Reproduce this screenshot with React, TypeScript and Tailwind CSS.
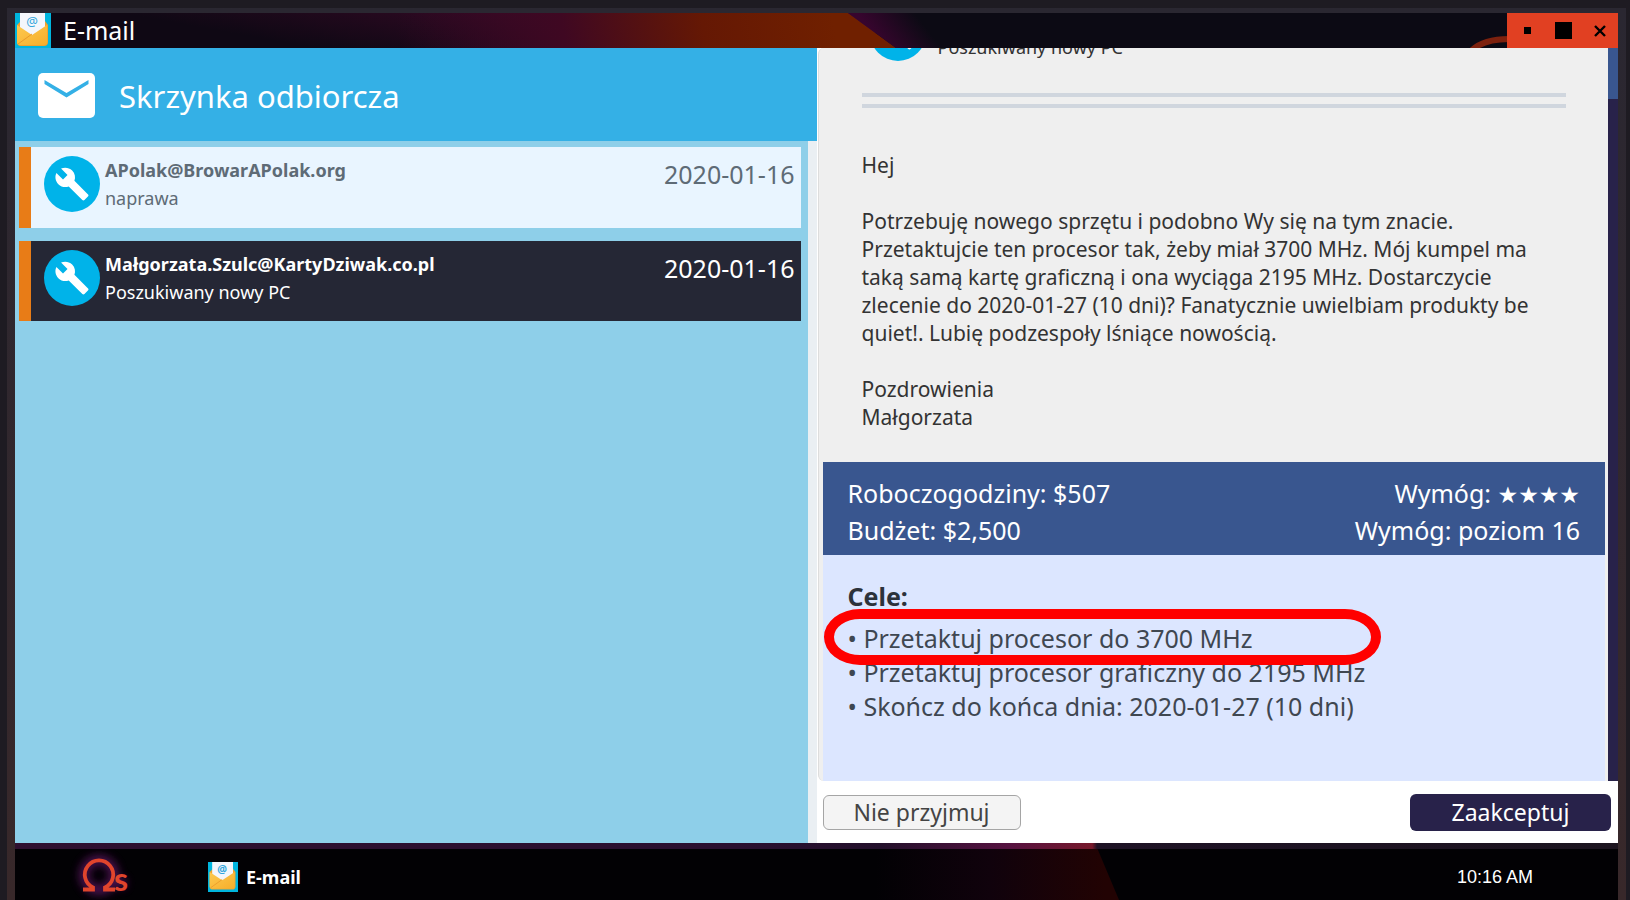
import { useState } from "react";
import { MdBuild } from "react-icons/md";

type Mail = {
  id: number;
  from: string;
  subject: string;
  date: string;
};

const mails: Mail[] = [
  { id: 1, from: "APolak@BrowarAPolak.org", subject: "naprawa", date: "2020-01-16" },
  { id: 2, from: "Małgorzata.Szulc@KartyDziwak.co.pl", subject: "Poszukiwany nowy PC", date: "2020-01-16" },
];

const goals = [
  "Przetaktuj procesor do 3700 MHz",
  "Przetaktuj procesor graficzny do 2195 MHz",
  "Skończ do końca dnia: 2020-01-27 (10 dni)",
];

function MailAppIcon({ className }: { className: string }) {
  return (
    <svg viewBox="0 0 36 36" className={className} aria-hidden="true">
      <defs>
        <linearGradient id="flap" x1="0" y1="0" x2="1" y2="1">
          <stop offset="0" stopColor="#fdc94f" />
          <stop offset="1" stopColor="#f6ae2b" />
        </linearGradient>
      </defs>
      <rect width="36" height="36" fill="#00b5de" />
      <path d="M2 12 6 8h24l3 4v17a4 4 0 0 1-4 4H6a4 4 0 0 1-4-4Z" fill="#f0a22e" />
      <path d="M5 0h25v22H5Z" fill="#f4f6fb" />
      <text x="17" y="13" textAnchor="middle" fontSize="13" fill="#35a6dc" fontFamily="Noto Sans, sans-serif">
        @
      </text>
      <path d="M2 12 17 22 32 12v17a3 3 0 0 1-3 3H5a3 3 0 0 1-3-3Z" fill="url(#flap)" />
      <path d="M3 31 17 21" stroke="#e99a2b" strokeWidth="1" fill="none" />
    </svg>
  );
}

function InboxIcon() {
  return (
    <svg viewBox="0 0 57 45" className="h-[45px] w-[57px]" aria-hidden="true">
      <rect width="57" height="45" rx="5" fill="#fff" />
      <path d="M6.500 7 28.500 20 50.500 7v4L28.500 24.500 6.500 11Z" fill="#34b0e6" />
    </svg>
  );
}

function OmegaLogo() {
  return (
    <svg viewBox="0 -1 80 50" className="h-[50px] w-20 overflow-visible" aria-hidden="true">
      <defs>
        <filter id="glow" x="-50%" y="-50%" width="200%" height="200%">
          <feGaussianBlur stdDeviation="4" />
        </filter>
      </defs>
      <g fill="none" stroke="#7a1a80" strokeWidth="10" opacity="0.6" filter="url(#glow)">
        <circle cx="33" cy="22" r="15" />
        <path d="M51 30h9" />
      </g>
      <path
        d="M17 36.500H27V34.500A14.200 14.200 0 1 1 39 34.500V36.500H49"
        fill="none"
        stroke="#e0452c"
        strokeWidth="3.800"
      />
      <text x="48" y="38" fontSize="32" fontWeight="700" fill="#e0452c" fontFamily="Lato, sans-serif">
        s
      </text>
    </svg>
  );
}

function TitleBarArt() {
  return (
    <svg viewBox="0 0 1603 35" preserveAspectRatio="none" className="absolute inset-0 h-full w-full" aria-hidden="true">
      <defs>
        <linearGradient id="sweep" gradientUnits="userSpaceOnUse" x1="300" y1="35" x2="318" y2="-65">
          <stop offset="0" stopColor="#0f0814" />
          <stop offset="1" stopColor="#3f0a2a" />
        </linearGradient>
        <linearGradient id="ember" gradientUnits="userSpaceOnUse" x1="385" y1="35" x2="810" y2="-40">
          <stop offset="0" stopColor="#3c0726" stopOpacity="0" />
          <stop offset="0.380" stopColor="#3f0822" />
          <stop offset="0.700" stopColor="#651804" />
          <stop offset="1" stopColor="#702000" />
        </linearGradient>
        <linearGradient id="edge" gradientUnits="userSpaceOnUse" x1="856" y1="18" x2="892" y2="-10">
          <stop offset="0" stopColor="#37052e" />
          <stop offset="1" stopColor="#0c0a14" />
        </linearGradient>
      </defs>
      <rect width="1603" height="35" fill="#0c0a14" />
      <rect width="860" height="35" fill="url(#sweep)" />
      <path d="M300 0H833L881 35H300Z" fill="url(#ember)" />
      <path d="M833 0H1000V35H881Z" fill="url(#edge)" />
      <path d="M1456 38Q1468 26 1494 26" fill="none" stroke="#7d210e" strokeWidth="6" />
    </svg>
  );
}

function TaskbarArt() {
  return (
    <svg viewBox="0 0 1603 57" preserveAspectRatio="none" className="absolute inset-0 h-full w-full" aria-hidden="true">
      <defs>
        <linearGradient id="strip">
          <stop offset="0" stopColor="#2f1030" />
          <stop offset="0.450" stopColor="#2a1030" />
          <stop offset="0.540" stopColor="#23102b" />
          <stop offset="0.620" stopColor="#561240" />
          <stop offset="0.672" stopColor="#76192b" />
          <stop offset="0.675" stopColor="#1e1225" />
          <stop offset="1" stopColor="#1c141f" />
        </linearGradient>
        <linearGradient id="floor" gradientUnits="userSpaceOnUse" x1="860" y1="0" x2="1090" y2="0">
          <stop offset="0" stopColor="#020104" />
          <stop offset="0.500" stopColor="#10020c" />
          <stop offset="1" stopColor="#220303" />
        </linearGradient>
      </defs>
      <rect width="1603" height="57" fill="#020104" />
      <path d="M860 0H1080L1104 57H860Z" fill="url(#floor)" />
      <rect width="1603" height="6" fill="url(#strip)" />
    </svg>
  );
}

function Avatar() {
  return (
    <span className="flex size-14 shrink-0 items-center justify-center rounded-full bg-[#00b3e9] text-white">
      <MdBuild className="size-9" />
    </span>
  );
}

export default function App() {
  const [selectedId, setSelectedId] = useState(2);

  return (
    <div className="h-screen overflow-hidden bg-[#1e1b22] pl-[7px] pr-1 pt-2 font-['Noto_Sans',sans-serif]">
      <div className="flex h-full flex-col bg-linear-to-b from-[#2a2731] to-[#38282a] pl-2 pr-2 pt-[5px]">
        {/* Title bar */}
        <header className="relative flex h-[35px] shrink-0 justify-between overflow-hidden">
          <TitleBarArt />
          <div className="relative flex items-center">
            <MailAppIcon className="size-9" />
            <h1 className="pb-0.5 pl-3 text-[25px] leading-8 text-white">E-mail</h1>
          </div>
          <div className="relative flex w-[111px] items-center bg-[#e14022] pl-0.5">
            <button type="button" aria-label="Minimalizuj" className="flex h-full flex-1 items-center justify-center">
              <span className="size-[7px] bg-black" />
            </button>
            <button type="button" aria-label="Maksymalizuj" className="flex h-full flex-1 items-center justify-center">
              <span className="size-[17px] bg-black" />
            </button>
            <button type="button" aria-label="Zamknij" className="flex h-full flex-1 items-center justify-center">
              <svg viewBox="0 0 12 12" className="size-3" aria-hidden="true">
                <path d="M1 1 11 11M11 1 1 11" stroke="#000" strokeWidth="2.400" />
              </svg>
            </button>
          </div>
        </header>

        <main className="flex min-h-0 flex-1">
          {/* Inbox */}
          <section className="flex min-w-0 flex-1 flex-col">
            <div className="flex h-[93px] shrink-0 items-center gap-6 bg-[#34b0e6] px-[23px] pt-0.5">
              <InboxIcon />
              <h2 className="text-[31px] leading-10 text-white">Skrzynka odbiorcza</h2>
            </div>
            <div className="flex flex-1 bg-[#eaeff3] pr-[9px]">
              <ul className="flex flex-1 flex-col gap-[13px] bg-[#8ecfe9] pl-1 pr-[7px] pt-1.5">
                {mails.map((mail) => {
                  const selected = mail.id === selectedId;
                  return (
                    <li key={mail.id}>
                      <button
                        type="button"
                        onClick={() => setSelectedId(mail.id)}
                        className={
                          selected
                            ? "flex h-20 w-full items-start gap-[5px] border-l-12 border-[#e87c17] bg-[#252735] pl-[13px] pr-1.5 pt-[9px] text-left text-white"
                            : "flex h-[81px] w-full items-start gap-[5px] border-l-12 border-[#e87c17] bg-[#e9f5ff] pl-[13px] pr-1.5 pt-[9px] text-left text-[#5e6b76]"
                        }
                      >
                        <Avatar />
                        <span className="flex flex-1 flex-col text-[18px] leading-7">
                          <span className="font-bold">{mail.from}</span>
                          <span>{mail.subject}</span>
                        </span>
                        <span className="text-[25px] leading-9">{mail.date}</span>
                      </button>
                    </li>
                  );
                })}
              </ul>
            </div>
          </section>

          {/* Opened message */}
          <section className="flex min-w-0 flex-1 flex-col bg-white">
            <div className="flex min-h-0 flex-1">
              <article className="ml-px flex min-w-0 flex-1 flex-col justify-end overflow-hidden rounded-l-md border-l border-[#dddddd] bg-[#efefef] pl-1 pr-[3px]">
                <div className="pl-[39px] pr-[39px] text-[21px] leading-7 text-[#333333]">
                  <div className="flex items-end gap-3 pl-2">
                    <Avatar />
                    <p className="text-[18px]">Poszukiwany nowy PC</p>
                  </div>
                  <div className="my-8 h-[15px] border-y-4 border-[#d0d6de]" />
                  <div className="pt-[11px]">
                    <p>Hej</p>
                    <p className="pt-7">
                      Potrzebuję nowego sprzętu i podobno Wy się na tym znacie. Przetaktujcie ten procesor tak, żeby miał
                      3700 MHz. Mój kumpel ma taką samą kartę graficzną i ona wyciąga 2195 MHz. Dostarczycie zlecenie do
                      2020-01-27 (10 dni)? Fanatycznie uwielbiam produkty be quiet!. Lubię podzespoły lśniące nowością.
                    </p>
                    <p className="pt-7">Pozdrowienia</p>
                    <p className="pb-[31px]">Małgorzata</p>
                  </div>
                </div>

                <div className="flex h-[93px] shrink-0 items-center justify-between bg-[#39568f] px-[25px] pt-1.5 text-[25px] leading-[37px] text-white">
                  <div>
                    <p>Roboczogodziny: $507</p>
                    <p>Budżet: $2,500</p>
                  </div>
                  <div className="text-right">
                    <p>
                      Wymóg: <span className="font-['DejaVu_Sans',sans-serif] text-[23px] leading-8">★★★★</span>
                    </p>
                    <p>Wymóg: poziom 16</p>
                  </div>
                </div>

                <div className="h-[226px] shrink-0 bg-[#dce6ff] px-[25px] pt-6 text-[25px] leading-[34px] text-[#3f4751]">
                  <h3 className="pb-2 font-bold text-[#2c323a]">Cele:</h3>
                  <ul>
                    {goals.map((goal, i) => (
                      <li key={goal} className="relative w-fit">
                        • {goal}
                        {i === 0 && (
                          <span className="pointer-events-none absolute -left-6 -top-3 z-10 h-14 w-[557px] rounded-[36px/28px] border-10 border-[#ff0000]" />
                        )}
                      </li>
                    ))}
                  </ul>
                </div>
              </article>
              <div className="w-2.5 shrink-0 bg-[#28224a]">
                <div className="h-[51px] bg-[#39568f]" />
              </div>
            </div>
            <footer className="flex h-[62px] shrink-0 items-center justify-between pl-1.5 pr-[7px]">
              <button
                type="button"
                className="h-[35px] w-[198px] rounded-md border border-[#a5a5a5] bg-[#f4f4f4] text-[23px] leading-8 text-[#444444]"
              >
                Nie przyjmuj
              </button>
              <button type="button" className="h-[37px] w-[201px] rounded-md bg-[#28224a] text-[23px] leading-8 text-white">
                Zaakceptuj
              </button>
            </footer>
          </section>
        </main>

        {/* Taskbar */}
        <nav className="relative flex h-[57px] shrink-0 items-center justify-between overflow-hidden pl-[51px] pr-[85px] pt-[11px]">
          <TaskbarArt />
          <div className="relative flex items-center gap-[62px]">
            <OmegaLogo />
            <button type="button" className="flex items-center gap-2 text-[18px] font-bold leading-6 text-white">
              <MailAppIcon className="size-[30px]" />
              E-mail
            </button>
          </div>
          <time className="relative font-['Liberation_Sans',sans-serif] text-[18px] leading-6 text-white">10:16 AM</time>
        </nav>
      </div>
    </div>
  );
}
